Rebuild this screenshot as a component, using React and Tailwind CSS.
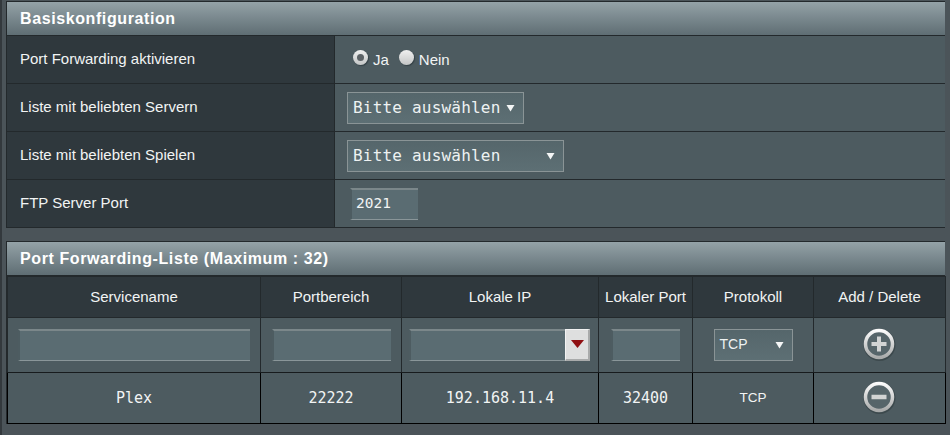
import React from 'react';

const sans = "font-['Liberation_Sans',Arial,sans-serif]";
const mono = "font-['DejaVu_Sans_Mono',monospace]";

const Caret = ({ className = '' }) => (
  <svg width="9" height="8" viewBox="0 0 9 8" className={className}>
    <path d="M0.5 1h8L4.5 7.5z" fill="#f4f6f6" />
  </svg>
);

const SelectBox = ({ label, width, fontClass = mono, textSize = 'text-[16px] tracking-[0.2px]' }) => (
  <div className={`${width} h-[32px] flex items-center justify-between pl-[5px] pr-[8px] border border-[#8a9496] bg-gradient-to-b from-[#55666b] to-[#5d6f74]`}>
    <span className={`${fontClass} ${textSize} text-[#eef2f2] whitespace-nowrap`}>{label}</span>
    <Caret />
  </div>
);

const SunkenInput = ({ width, children }) => (
  <div className={`${width} h-[32px] bg-[#5a6c72] border-t-2 border-l-2 border-t-[#7b878a] border-l-[#4d5c61] border-b border-b-[#8a9699] flex items-center pl-[4px]`}>
    {children}
  </div>
);

const CircleIcon = ({ kind }) => (
  <svg width="34" height="34" viewBox="0 0 34 34">
    <defs>
      <linearGradient id={`ring-${kind}`} x1="0" y1="0" x2="0" y2="1">
        <stop offset="0" stopColor="#fbfbfb" />
        <stop offset="1" stopColor="#a9abab" />
      </linearGradient>
    </defs>
    <circle cx="16.5" cy="17" r="14" fill="none" stroke="#2f3a3e" strokeOpacity="0.55" strokeWidth="4" />
    <circle cx="16" cy="16" r="13.5" fill="#56656a" stroke={`url(#ring-${kind})`} strokeWidth="3.5" />
    {kind === 'plus' ? (
      <path d="M16 8.5v15M8.5 16h15" stroke="#d2d4d4" strokeWidth="4" />
    ) : (
      <path d="M8.5 16h15" stroke="#d2d4d4" strokeWidth="4.5" />
    )}
  </svg>
);

const Radio = ({ checked }) => (
  <span className="w-[15px] h-[15px] mb-[4px] rounded-full bg-gradient-to-b from-[#f0f0f0] to-[#c4c6c6] flex items-center justify-center shadow-[1px_1px_1px_rgba(30,40,45,0.5)]">
    {checked && <span className="w-[7px] h-[7px] rounded-full bg-[#5c6266]" />}
  </span>
);

const TitleBar = ({ children }) => (
  <div className="h-[34px] flex items-center pl-[13px] border-b border-[#23292c] bg-gradient-to-b from-[#94a2a7] to-[#5f6e74]">
    <span className={`${sans} text-[16px] font-bold tracking-[0.6px] text-white`}>{children}</span>
  </div>
);

const ConfigRow = ({ label, children }) => (
  <div className="h-[48px] flex border-b border-[#23292c]">
    <div className={`${sans} w-[328px] flex items-center pl-[13px] bg-[#2f383d] border-r border-[#23292c] text-[15px] text-[#f2f4f4]`}>{label}</div>
    <div className="flex-1 flex items-center pl-[12px] bg-[#4d5b60]">{children}</div>
  </div>
);

const th = `${sans} bg-[#2f383d] border border-[#23292c] text-[15px] font-normal text-[#f2f4f4] text-center`;
const inputCell = 'bg-[#4d5b60] border border-[#23292c] border-b-[#171b1d] px-0 pb-[1px]';
const dataCell = 'bg-[#4d5b60] border border-black text-center text-[#f2f4f4]';

export default function App() {
  return (
    <div className="w-[950px] h-[435px] overflow-hidden bg-[#4b5459] border-l-2 border-l-[#33393d] pl-[4px] pr-[5px] pt-[1px]">
      <div className="border-t border-l border-[#23292c]">
        <TitleBar>Basiskonfiguration</TitleBar>
        <ConfigRow label="Port Forwarding aktivieren">
          <div className={`${sans} flex items-center text-[15px] text-[#f2f4f4] pl-[6px]`}>
            <Radio checked />
            <span className="ml-[5px] mr-[10px] mt-[1px]">Ja</span>
            <Radio />
            <span className="ml-[5px] mt-[1px]">Nein</span>
          </div>
        </ConfigRow>
        <ConfigRow label="Liste mit beliebten Servern">
          <SelectBox label="Bitte auswählen" width="w-[177px]" />
        </ConfigRow>
        <ConfigRow label="Liste mit beliebten Spielen">
          <SelectBox label="Bitte auswählen" width="w-[217px]" />
        </ConfigRow>
        <ConfigRow label="FTP Server Port">
          <div className="pl-[3px]">
            <SunkenInput width="w-[68px]">
              <span className={`${mono} text-[14.5px] text-[#f2f4f4]`}>2021</span>
            </SunkenInput>
          </div>
        </ConfigRow>
      </div>

      <div className="mt-[13px] border-t border-l border-[#23292c]">
        <TitleBar>Port Forwarding-Liste (Maximum : 32)</TitleBar>
        <table className="w-[938px] table-fixed border-collapse">
          <colgroup>
            <col className="w-[253px]" />
            <col className="w-[141px]" />
            <col className="w-[197px]" />
            <col className="w-[94px]" />
            <col className="w-[121px]" />
            <col className="w-[132px]" />
          </colgroup>
          <thead>
            <tr className="h-[41px]">
              <th className={th}>Servicename</th>
              <th className={th}>Portbereich</th>
              <th className={th}>Lokale IP</th>
              <th className={th}>Lokaler Port</th>
              <th className={th}>Protokoll</th>
              <th className={th}>Add / Delete</th>
            </tr>
          </thead>
          <tbody>
            <tr className="h-[55px]">
              <td className={inputCell}>
                <div className="flex justify-center"><SunkenInput width="w-[232px]" /></div>
              </td>
              <td className={inputCell}>
                <div className="flex justify-center"><SunkenInput width="w-[119px]" /></div>
              </td>
              <td className={inputCell}>
                <div className="flex justify-center">
                  <div className="flex mr-[1px]">
                    <SunkenInput width="w-[156px]" />
                    <div className="w-[25px] h-[32px] flex items-center justify-center bg-[#dedfdf] border-t border-l border-t-[#f2f2f2] border-l-[#f2f2f2] border-b-2 border-r-2 border-b-[#a9abab] border-r-[#a9abab]">
                      <svg width="13" height="8" viewBox="0 0 13 8"><path d="M0 0h13L6.5 8z" fill="#8f0f12" /></svg>
                    </div>
                  </div>
                </div>
              </td>
              <td className={inputCell}>
                <div className="flex justify-center"><SunkenInput width="w-[69px]" /></div>
              </td>
              <td className={inputCell}>
                <div className="flex justify-center">
                  <SelectBox label="TCP" width="w-[79px]" fontClass={sans} textSize="text-[14px]" />
                </div>
              </td>
              <td className={inputCell}>
                <div className="flex justify-center"><CircleIcon kind="plus" /></div>
              </td>
            </tr>
            <tr className="h-[51px]">
              <td className={`${dataCell} ${mono} text-[15px]`}>Plex</td>
              <td className={`${dataCell} ${mono} text-[15px]`}>22222</td>
              <td className={`${dataCell} ${mono} text-[15px]`}>192.168.11.4</td>
              <td className={`${dataCell} ${mono} text-[15px]`}>32400</td>
              <td className={`${dataCell} ${sans} text-[13.5px]`}>TCP</td>
              <td className={dataCell}>
                <div className="flex justify-center"><CircleIcon kind="minus" /></div>
              </td>
            </tr>
          </tbody>
        </table>
      </div>
    </div>
  );
}
